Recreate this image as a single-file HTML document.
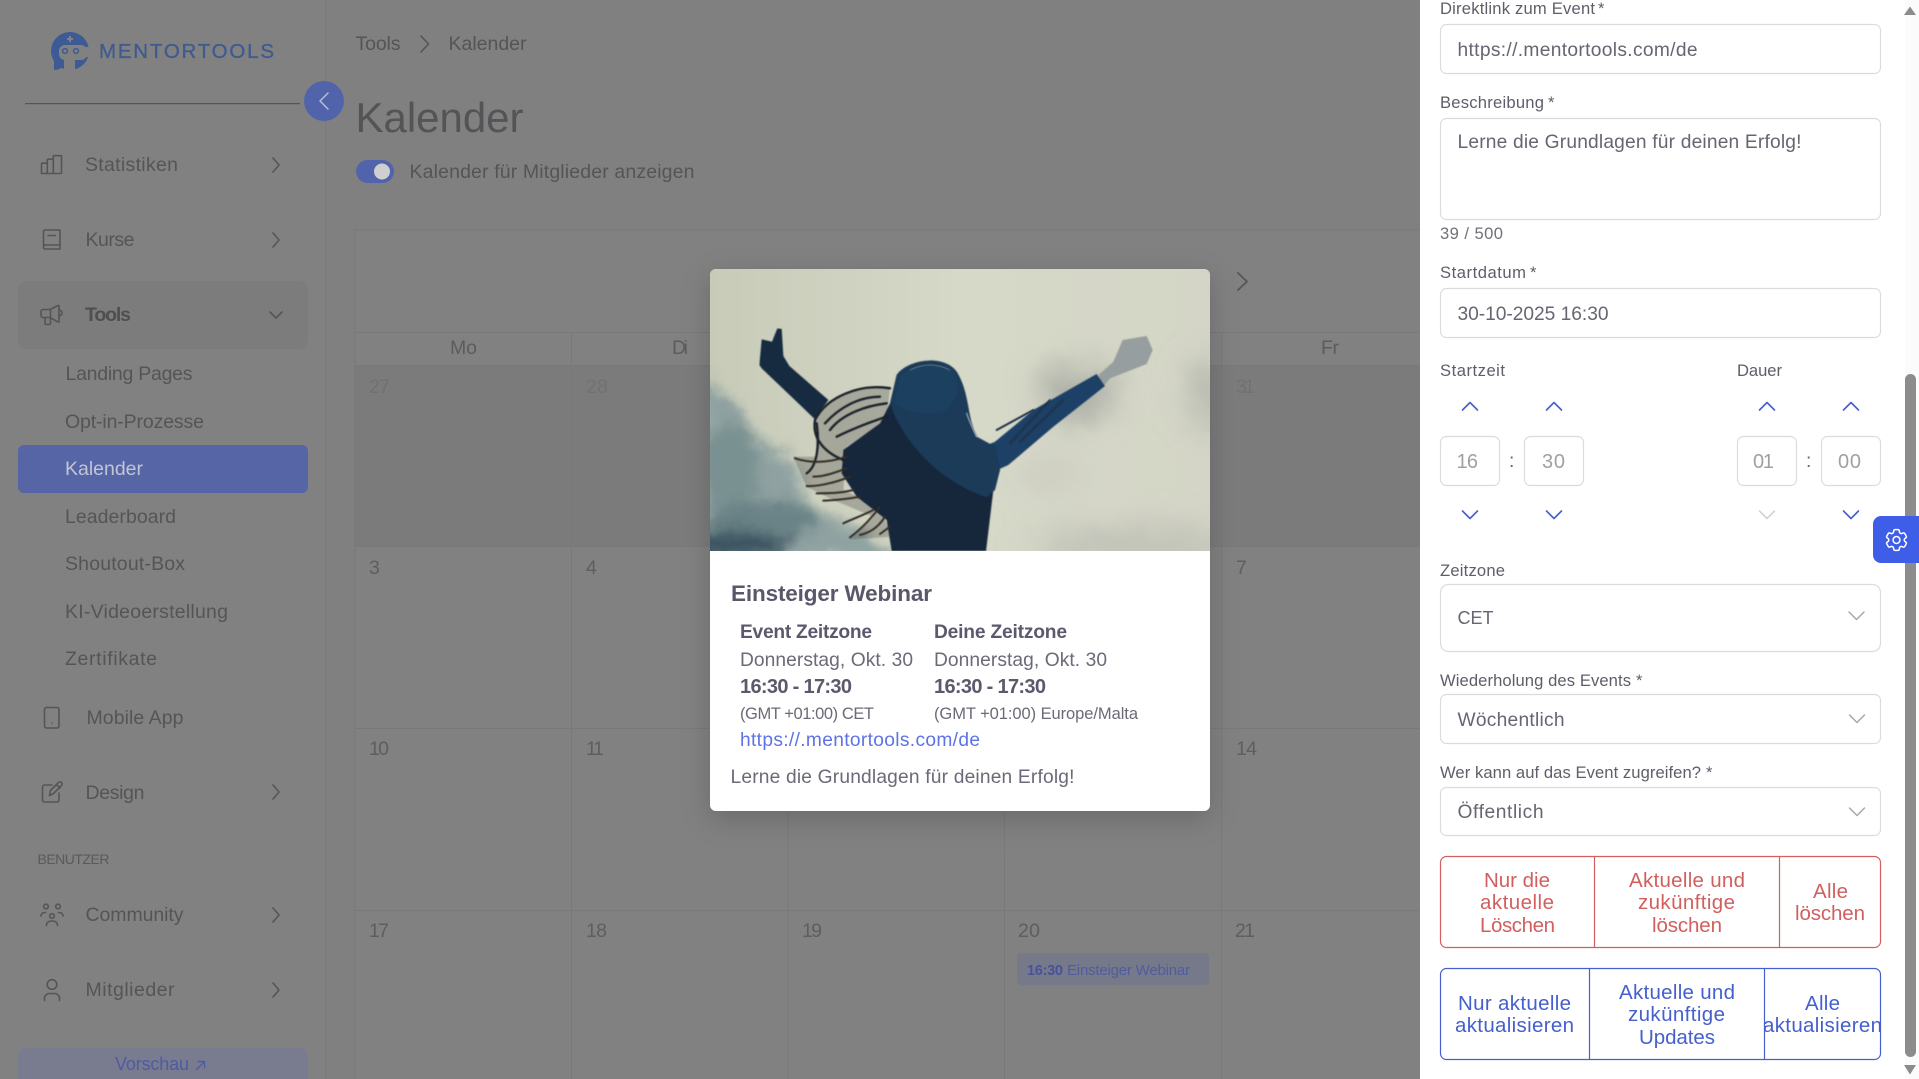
<!DOCTYPE html>
<html lang="de"><head><meta charset="utf-8"><title>Kalender</title>
<style>
html,body{margin:0;padding:0;width:1919px;height:1079px;overflow:hidden;background:#808080}
svg{display:block}
text{font-family:"Liberation Sans",sans-serif;white-space:pre}
.s{font-size:19.5px;fill:#555558}
.sb{font-size:19.5px;fill:#4f4f52;font-weight:700}
.n{font-size:19.5px;fill:#5e5e60}
.o{font-size:19.5px;fill:#717173}
.d{font-size:19.2px;fill:#6a6a78}
.db{font-size:19.2px;font-weight:700;fill:#5a5a6c}
.l{font-size:16.6px;fill:#5e5e6a}
.v{font-size:19.2px;fill:#666672}
.t{font-size:20px;fill:#a0a0a4}
.r{font-size:20.5px;fill:#d25f5f}
.b{font-size:20.5px;fill:#4560cc}
.ic{fill:none;stroke:#555558;stroke-width:1.6;stroke-linecap:round;stroke-linejoin:round}
.ln{stroke:#79797b;stroke-width:1}
.fb{fill:#fff;stroke:#dcdce0;stroke-width:1.2}
.ch{fill:none;stroke:#4560cc;stroke-width:1.6;stroke-linecap:round;stroke-linejoin:round}
.cg{fill:none;stroke:#a8a8ac;stroke-width:1.5;stroke-linecap:round;stroke-linejoin:round}
</style></head><body>
<svg width="1919" height="1079" viewBox="0 0 1919 1079" xmlns="http://www.w3.org/2000/svg">
<defs>
<filter id="sh" x="-20%" y="-20%" width="140%" height="140%"><feDropShadow dx="0" dy="8" stdDeviation="14" flood-color="#000" flood-opacity=".18"/></filter>
<filter id="b1" filterUnits="userSpaceOnUse" x="-200" y="-200" width="2000" height="1300"><feGaussianBlur stdDeviation="20" result="g"/><feTurbulence type="fractalNoise" baseFrequency=".012" numOctaves="4" seed="7" result="n"/><feDisplacementMap in="g" in2="n" scale="60" xChannelSelector="R" yChannelSelector="G"/></filter>
<filter id="b2" filterUnits="userSpaceOnUse" x="-200" y="-200" width="2000" height="1300"><feGaussianBlur stdDeviation="1.8"/></filter>
<filter id="b3" filterUnits="userSpaceOnUse" x="-200" y="-200" width="2000" height="1300"><feGaussianBlur stdDeviation="48" result="g"/><feTurbulence type="fractalNoise" baseFrequency=".01" numOctaves="3" seed="3" result="n"/><feDisplacementMap in="g" in2="n" scale="60" xChannelSelector="R" yChannelSelector="G"/></filter>
<linearGradient id="sky" x1="0" y1="0" x2="1" y2="0"><stop offset="0" stop-color="#c8cbb8"/><stop offset=".5" stop-color="#d6d8c8"/><stop offset="1" stop-color="#d4d5c6"/></linearGradient>
<clipPath id="clip"><path d="M30 873V45a18 18 0 0 1 18-18H1512a18 18 0 0 1 18 18V873Z"/></clipPath>
</defs>

<!-- page -->
<rect width="1919" height="1079" fill="#808080"/>
<rect x="0" y="0" width="325" height="1079" fill="#818181"/>
<rect x="325" y="0" width="1" height="1079" fill="#7a7a7a"/>

<!-- logo -->
<circle cx="70" cy="51" r="19" fill="#3d5a94"/>
<path d="M54 60 L54 70 Q60 70 65 65 Z M75 60 L79 68 L84 62 Z" fill="#3d5a94"/>
<rect x="59" y="45" width="28" height="15" rx="6" fill="#818181"/>
<rect x="64" y="60" width="11" height="12" fill="#818181"/>
<rect x="86" y="47" width="4" height="10" fill="#818181"/>
<rect x="69" y="36" width="2" height="6" fill="#818181"/><rect x="67" y="38" width="6" height="2" fill="#818181"/>
<circle cx="65" cy="51" r="2.4" fill="none" stroke="#3d5a94" stroke-width="1.5"/>
<circle cx="76" cy="51" r="2.4" fill="none" stroke="#3d5a94" stroke-width="1.5"/>
<text x="99" y="58" textLength="175" style="font-size:20.5px;fill:#3e5a90;stroke:#3e5a90;stroke-width:.3">MENTORTOOLS</text>
<rect x="25" y="103" width="275" height="1.2" fill="#555"/>
<circle cx="324" cy="101" r="20" fill="#5164ab"/>
<path d="M328 93 L320 101 L328 109" fill="none" stroke="#b9bdd2" stroke-width="1.5" stroke-linecap="round" stroke-linejoin="round"/>

<!-- sidebar -->
<rect x="18" y="281" width="290" height="68" rx="8" fill="#7c7c7c"/>
<rect x="18" y="445" width="290" height="48" rx="6" fill="#5565a6"/>
<path class="ic" d="M41.5 173.500V164a.8.8 0 0 1 .8-.8h5v10.300ZM47.300 173.500V160a.8.8 0 0 1 .8-.8h5.200V173.500ZM53.300 173.500V156.500a.8.8 0 0 1 .8-.8h7.400V172.700a.8.8 0 0 1-.8.8H42.300"/>
<path class="ic" d="M43.500 245V231.500a1.500 1.500 0 0 1 1.500-1.500H60V249H45a1.500 1.500 0 0 1-1.500-1.500V245H60M48 235.500H55.500"/>
<path class="ic" d="M41 311.500a2 2 0 0 1 2-2H50L58 305.500H59V322H58L50 317.500H43a2 2 0 0 1-2-2ZM59 310q3 .5 3 3t-3 3M45 317.500V323a1.500 1.500 0 0 0 1.500 1.500H49a1.500 1.500 0 0 0 1.500-1.500V309.500"/>
<rect class="ic" x="44.500" y="707.500" width="14.500" height="20.500" rx="2"/><circle cx="52" cy="723" r=".8" fill="#555558"/>
<path class="ic" d="M52 785H44.500a2 2 0 0 0-2 2V800a2 2 0 0 0 2 2H57a2 2 0 0 0 2-2V793M49.500 795.500L50.500 790.500L58.500 782.500a2 2 0 0 1 3 3L53.500 793.500ZM56.500 784.500L60 788"/>
<circle class="ic" cx="46" cy="906.500" r="2.300"/><circle class="ic" cx="58" cy="906.500" r="2.300"/><circle class="ic" cx="52" cy="916" r="2.300"/>
<path class="ic" d="M41 916q0-3.500 4.500-3.500M63 916q0-3.500-4.500-3.500M46.500 925.500q0-4.500 5.500-4.500t5.500 4.500"/>
<circle class="ic" cx="52" cy="984.500" r="4.800"/>
<path class="ic" d="M44.500 1000.500v-2a5 5 0 0 1 5-5h5a5 5 0 0 1 5 5v2"/>

<text class="s" x="85" y="171" textLength="93">Statistiken</text>
<text class="s" x="85.500" y="246" textLength="49">Kurse</text>
<text class="sb" x="85" y="321" textLength="46">Tools</text>
<text class="s" x="65.500" y="380" textLength="127">Landing Pages</text>
<text class="s" x="65" y="428" textLength="139">Opt-in-Prozesse</text>
<text class="s" x="65" y="475" textLength="78" style="fill:#c2c5d4">Kalender</text>
<text class="s" x="65" y="523" textLength="111">Leaderboard</text>
<text class="s" x="65" y="570" textLength="120">Shoutout-Box</text>
<text class="s" x="65" y="618" textLength="163">KI-Videoerstellung</text>
<text class="s" x="65" y="665" textLength="92">Zertifikate</text>
<text class="s" x="86.500" y="724" textLength="97">Mobile App</text>
<text class="s" x="85.500" y="799" textLength="59">Design</text>
<text x="37.500" y="864" textLength="72" style="font-size:14px;fill:#5a5a5c">BENUTZER</text>
<text class="s" x="85.500" y="921" textLength="98">Community</text>
<text class="s" x="85.500" y="996" textLength="89">Mitglieder</text>
<g class="ic"><path d="M273 158L279 165L273 172"/><path d="M273 233L279 240L273 247"/><path d="M270 312L276 318L282 312"/><path d="M273 785L279 792L273 799"/><path d="M273 908L279 915L273 922"/><path d="M273 983L279 990L273 997"/></g>
<path d="M18 1079V1056a8 8 0 0 1 8-8H300a8 8 0 0 1 8 8v23Z" fill="#797c8e"/>
<text x="115" y="1070" textLength="74" style="font-size:18px;fill:#4f5aa4">Vorschau</text>
<path d="M196 1070L204.500 1061.500M197.500 1061.500H204.500V1068.500" fill="none" stroke="#4f5aa4" stroke-width="1.4"/>

<!-- header -->
<text class="s" x="355.500" y="50" textLength="45">Tools</text>
<path class="ic" d="M421 36L428.500 44L421 52"/>
<text class="s" x="448.500" y="50" textLength="78">Kalender</text>
<text x="355.500" y="132" textLength="168" style="font-size:42px;fill:#545456">Kalender</text>
<rect x="356" y="160" width="38" height="23" rx="11.500" fill="#5164ab"/>
<circle cx="382" cy="171.500" r="8" fill="#cfcfd2"/>
<text class="s" x="409.500" y="178" textLength="285">Kalender für Mitglieder anzeigen</text>

<!-- calendar -->
<rect x="355" y="230" width="1065" height="849" fill="#818181"/>
<rect x="355" y="365" width="1065" height="181" fill="#7b7b7b"/>
<g class="ln">
<path d="M355 230V1079M355 230H1420M355 332.500H1420M355 365.500H1420M355 546.500H1420M355 728.500H1420M355 910.500H1420"/>
<path d="M571.500 332V1079M788 365V1079M1004.500 365V1079M1221.500 332V1079"/>
</g>
<text class="s" x="450" y="354" textLength="27" style="fill:#5c5c5e">Mo</text>
<text class="s" x="672" y="354" textLength="16" style="fill:#5c5c5e">Di</text>
<text class="s" x="1321" y="354" textLength="18" style="fill:#5c5c5e">Fr</text>
<path d="M1238 273L1247 281.500L1238 290" fill="none" stroke="#555558" stroke-width="1.800" stroke-linecap="round" stroke-linejoin="round"/>
<text class="o" x="369" y="393" textLength="21">27</text>
<text class="o" x="586" y="393" textLength="22">28</text>
<text class="o" x="1236" y="393" textLength="19">31</text>
<text class="n" x="369" y="574">3</text><text class="n" x="586" y="574">4</text><text class="n" x="1236" y="574">7</text>
<text class="n" x="369" y="755" textLength="20">10</text><text class="n" x="586" y="755" textLength="18">11</text><text class="n" x="1236" y="755" textLength="21">14</text>
<text class="n" x="369" y="937" textLength="20">17</text><text class="n" x="586" y="937" textLength="21">18</text><text class="n" x="802" y="937" textLength="20">19</text><text class="n" x="1018" y="937" textLength="22">20</text><text class="n" x="1235" y="937" textLength="20">21</text>
<rect x="1017" y="953" width="192" height="32" rx="4" fill="#767989"/>
<text x="1027" y="975" textLength="36" style="font-size:14.5px;font-weight:700;fill:#48529a">16:30</text>
<text x="1067" y="975" textLength="123" style="font-size:15px;fill:#505c9e">Einsteiger Webinar</text>

<!-- modal -->
<rect x="710" y="269" width="500" height="542" rx="6" fill="#fff" filter="url(#sh)"/>
<svg x="710" y="269" width="500" height="282" viewBox="30 27 1500 846" preserveAspectRatio="none">
<g clip-path="url(#clip)">
<rect x="30" y="27" width="1500" height="846" fill="url(#sky)"/>
<g filter="url(#b3)">
<ellipse cx="1130" cy="400" rx="110" ry="85" fill="#aaada5"/>
<ellipse cx="1530" cy="400" rx="60" ry="110" fill="#b5b8ad"/>
<ellipse cx="1300" cy="860" rx="300" ry="60" fill="#c0c1b7"/>
<ellipse cx="1050" cy="640" rx="100" ry="40" fill="#cacbc0"/>
</g>
<g filter="url(#b1)">
<path d="M0 340C80 360 120 480 170 530C240 570 290 610 330 720C400 800 520 800 600 900H0Z" fill="#8fa2a1"/>
<ellipse cx="90" cy="620" rx="90" ry="130" fill="#7a9192"/>
<ellipse cx="190" cy="780" rx="170" ry="60" fill="#6a8387"/>
<ellipse cx="90" cy="860" rx="190" ry="50" fill="#3d5763"/>
</g>
<g filter="url(#b2)">
<path d="M1196 345L1240 305L1268 240L1340 228L1358 270L1340 312L1230 355L1205 385Z" fill="#979e9f"/>
<path d="M178 315L185 238L216 245L232 205L245 207L250 288L268 318L385 420L345 478L290 425L185 325Z" fill="#182a40"/>
<path d="M850 560L885 545L1000 450L1190 342L1215 378L1060 500L925 615L870 640Z" fill="#1c3f66"/>
<!-- hair translucent mass -->
<path d="M345 480C370 420 440 385 570 380L560 480L440 560L430 690L540 740L575 830L450 838L520 770L400 720L320 680L280 590L350 590Z" fill="#39383a" opacity=".28"/>
<!-- body -->
<path d="M590 345C620 300 730 280 770 335C810 400 800 470 830 530L885 560L900 630L880 690L858 873H575L560 780L470 710L425 640L430 570L540 490L570 430Z" fill="#15263a"/>
<path d="M590 345C620 300 730 280 770 335C810 400 800 470 830 530L885 560L900 630L885 690L860 712C760 680 650 600 585 470L570 430Z" fill="#1a3a58"/>
<path d="M600 345C640 310 730 300 765 340C785 380 770 420 740 450C690 470 620 460 580 430Z" fill="#1c3f5f"/>
</g>
<g fill="none" stroke-linecap="round" filter="url(#b2)">
<g stroke="#1d222c" stroke-width="7"><path d="M570 385C480 370 380 410 345 480C335 540 380 580 430 600"/><path d="M560 430C480 440 420 470 390 510"/><path d="M350 490C360 560 350 620 320 640"/><path d="M560 470C500 490 450 510 410 530"/><path d="M540 410C480 410 420 440 375 490"/></g>
<g stroke="#352f27" stroke-width="6"><path d="M440 590C380 610 330 610 285 595"/><path d="M450 650C400 670 350 680 320 678"/><path d="M480 710C430 720 400 720 370 722"/><path d="M540 740C510 780 480 810 450 832"/><path d="M555 770C530 810 500 820 480 825"/><path d="M570 800L540 822"/><path d="M440 625C400 640 370 650 340 650"/><path d="M460 690C420 700 390 700 350 700"/><path d="M520 750C480 770 450 780 430 790"/></g>
<g stroke="#23324a" stroke-width="6"><path d="M890 510L1000 450"/><path d="M930 550L1050 420"/><path d="M960 545L1090 420"/></g>
<path d="M800 460C810 490 820 510 830 530" stroke="#9aa6aa" stroke-width="4"/>
<path d="M630 330C670 310 710 310 750 330" stroke="#7d8d98" stroke-width="2"/>
</g>
</g>
</svg>
<text x="731" y="601" textLength="201" style="font-size:22.5px;font-weight:700;fill:#585868">Einsteiger Webinar</text>
<text class="db" x="740" y="638" textLength="132">Event Zeitzone</text>
<text class="db" x="934" y="638" textLength="133">Deine Zeitzone</text>
<text class="d" x="740" y="666" textLength="173">Donnerstag, Okt. 30</text>
<text class="d" x="934" y="666" textLength="173">Donnerstag, Okt. 30</text>
<text class="db" x="740" y="693" textLength="112" style="font-size:20px">16:30 - 17:30</text>
<text class="db" x="934" y="693" textLength="112" style="font-size:20px">16:30 - 17:30</text>
<text x="740" y="719" textLength="134" style="font-size:16.5px;fill:#6a6a78">(GMT +01:00) CET</text>
<text x="934" y="719" textLength="204" style="font-size:16.5px;fill:#6a6a78">(GMT +01:00) Europe/Malta</text>
<text x="740" y="746" textLength="240" style="font-size:19.2px;fill:#5f73e4">https://.mentortools.com/de</text>
<text class="d" x="730.500" y="783" textLength="344">Lerne die Grundlagen für deinen Erfolg!</text>

<!-- right panel -->
<rect x="1420" y="0" width="499" height="1079" fill="#fff"/>
<rect x="1905" y="0" width="14" height="1079" fill="#fbfbfb"/>
<text class="l" x="1440" y="14" textLength="155">Direktlink zum Event</text><text class="l" x="1598" y="14">*</text>
<rect class="fb" x="1440.500" y="24.500" width="440" height="49" rx="6"/>
<text class="v" x="1457.500" y="56" textLength="240">https://.mentortools.com/de</text>
<text class="l" x="1440" y="108" textLength="104">Beschreibung</text><text class="l" x="1548" y="108">*</text>
<rect class="fb" x="1440.500" y="118.500" width="440" height="101" rx="6"/>
<text class="v" x="1457.500" y="148" textLength="344">Lerne die Grundlagen für deinen Erfolg!</text>
<text class="l" x="1440" y="239" textLength="63" style="fill:#707078">39 / 500</text>
<text class="l" x="1440" y="278" textLength="86">Startdatum</text><text class="l" x="1530" y="278">*</text>
<rect class="fb" x="1440.500" y="288.500" width="440" height="49" rx="6"/>
<text class="v" x="1457.500" y="320" textLength="151">30-10-2025 16:30</text>
<text class="l" x="1440" y="376" textLength="65">Startzeit</text>
<text class="l" x="1737" y="376" textLength="45">Dauer</text>
<g class="ch"><path d="M1462.500 410L1470 402.500L1477.500 410"/><path d="M1546.500 410L1554 402.500L1561.500 410"/><path d="M1759.500 410L1767 402.500L1774.500 410"/><path d="M1843.500 410L1851 402.500L1858.500 410"/>
<path d="M1462.500 511L1470 518.500L1477.500 511"/><path d="M1546.500 511L1554 518.500L1561.500 511"/><path d="M1843.500 511L1851 518.500L1858.500 511"/></g>
<path class="cg" style="stroke:#cfcfd2" d="M1759.500 511L1767 518.500L1774.500 511"/>
<rect class="fb" x="1440.500" y="436.500" width="59" height="49" rx="6"/>
<rect class="fb" x="1524.500" y="436.500" width="59" height="49" rx="6"/>
<rect class="fb" x="1737.500" y="436.500" width="59" height="49" rx="6"/>
<rect class="fb" x="1821.500" y="436.500" width="59" height="49" rx="6"/>
<text class="t" x="1456.500" y="468" textLength="21.500">16</text><text class="t" x="1542" y="468" textLength="23">30</text>
<text class="t" x="1753" y="468" textLength="21">01</text><text class="t" x="1838" y="468" textLength="23">00</text>
<text class="v" x="1509" y="467">:</text><text class="v" x="1806" y="467">:</text>
<text class="l" x="1440" y="576" textLength="65">Zeitzone</text>
<rect class="fb" x="1440.500" y="584.500" width="440" height="67" rx="8"/>
<text class="v" x="1457.500" y="624" textLength="36" style="font-size:18px">CET</text>
<path class="cg" d="M1849 612L1856.500 619.500L1864 612"/>
<text class="l" x="1440" y="686" textLength="191">Wiederholung des Events</text><text class="l" x="1636" y="686">*</text>
<rect class="fb" x="1440.500" y="694.500" width="440" height="49" rx="6"/>
<text class="v" x="1457.500" y="726" textLength="107">Wöchentlich</text>
<path class="cg" d="M1849.500 715L1857 722.500L1864.500 715"/>
<text class="l" x="1440" y="778" textLength="261">Wer kann auf das Event zugreifen?</text><text class="l" x="1706" y="778">*</text>
<rect class="fb" x="1440.500" y="787.500" width="440" height="48" rx="6"/>
<text class="v" x="1457.500" y="818" textLength="86">Öffentlich</text>
<path class="cg" d="M1849.500 808L1857 815.500L1864.500 808"/>

<rect x="1440.500" y="856.500" width="440" height="91" rx="6" fill="#fff" stroke="#d25f5f" stroke-width="1.200"/>
<path d="M1594.500 857V948M1779.500 857V948" stroke="#d25f5f" stroke-width="1.200"/>
<text class="r" x="1484" y="887" textLength="66">Nur die</text><text class="r" x="1480" y="909" textLength="74">aktuelle</text><text class="r" x="1480" y="932" textLength="75">Löschen</text>
<text class="r" x="1629" y="887" textLength="116">Aktuelle und</text><text class="r" x="1638" y="909" textLength="97">zukünftige</text><text class="r" x="1652" y="932" textLength="70">löschen</text>
<text class="r" x="1813" y="898" textLength="35">Alle</text><text class="r" x="1795" y="920" textLength="70">löschen</text>

<rect x="1440.500" y="968.500" width="440" height="91" rx="6" fill="#fff" stroke="#4560cc" stroke-width="1.200"/>
<path d="M1589.500 969V1060M1764.500 969V1060" stroke="#4560cc" stroke-width="1.200"/>
<text class="b" x="1458" y="1010" textLength="113">Nur aktuelle</text><text class="b" x="1455" y="1032" textLength="119">aktualisieren</text>
<text class="b" x="1619" y="999" textLength="116">Aktuelle und</text><text class="b" x="1628" y="1021" textLength="97">zukünftige</text><text class="b" x="1639" y="1044" textLength="76">Updates</text>
<text class="b" x="1805" y="1010" textLength="35">Alle</text><text class="b" x="1763" y="1032" textLength="119">aktualisieren</text>

<!-- scrollbar -->
<rect x="1905" y="374" width="11" height="683" rx="5.500" fill="#8c8c8c"/>
<path d="M1904 15L1910 6.500L1916 15Z" fill="#8c8c8c"/>
<path d="M1904 1065L1910 1074.500L1916 1065Z" fill="#8c8c8c"/>

<!-- gear button -->
<path d="M1919 516H1881a8 8 0 0 0-8 8V555a8 8 0 0 0 8 8H1919Z" fill="#3f5ee8"/>
<g transform="translate(1882.700 526.200) scale(1.150)" fill="none" stroke="#fff" stroke-width="1.300" stroke-linejoin="round">
<path d="M9.594 3.940c.09-.542.56-.94 1.110-.94h2.593c.55 0 1.020.398 1.110.94l.213 1.281c.063.374.313.686.645.870.074.04.147.083.22.127.325.196.72.257 1.075.124l1.217-.456a1.125 1.125 0 0 1 1.370.49l1.296 2.247a1.125 1.125 0 0 1-.26 1.431l-1.003.827c-.293.241-.438.613-.43.992a7.723 7.723 0 0 1 0 .255c-.008.378.137.75.43.991l1.004.827c.424.35.534.955.26 1.430l-1.298 2.247a1.125 1.125 0 0 1-1.369.491l-1.217-.456c-.355-.133-.75-.072-1.076.124a6.470 6.470 0 0 1-.22.128c-.331.183-.581.495-.644.869l-.213 1.281c-.09.543-.56.94-1.110.94h-2.594c-.55 0-1.019-.398-1.110-.94l-.213-1.281c-.062-.374-.312-.686-.644-.870a6.520 6.520 0 0 1-.22-.127c-.325-.196-.72-.257-1.076-.124l-1.217.456a1.125 1.125 0 0 1-1.369-.49l-1.297-2.247a1.125 1.125 0 0 1 .26-1.431l1.004-.827c.292-.24.437-.613.43-.991a6.932 6.932 0 0 1 0-.255c.007-.38-.138-.751-.43-.992l-1.004-.827a1.125 1.125 0 0 1-.26-1.430l1.297-2.247a1.125 1.125 0 0 1 1.370-.491l1.216.456c.356.133.751.072 1.076-.124.072-.044.146-.086.22-.128.332-.183.582-.495.644-.869l.214-1.280Z"/>
<circle cx="12" cy="12" r="3"/></g>
</svg>
</body></html>
